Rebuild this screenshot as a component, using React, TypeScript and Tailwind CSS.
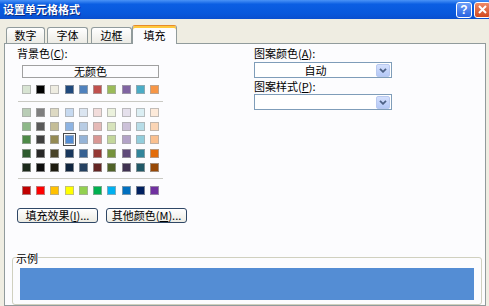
import React from "react";

const THEME = [
  "bg-[#d8e4d3]",
  "bg-[#000000]",
  "bg-[#eeece1]",
  "bg-[#1f497d]",
  "bg-[#4f81bd]",
  "bg-[#c0504d]",
  "bg-[#9bbb59]",
  "bg-[#8064a2]",
  "bg-[#4bacc6]",
  "bg-[#f79646]",
];

const SHADES = [
  ["bg-[#b9cdb6]", "bg-[#7f7f7f]", "bg-[#ddd9c3]", "bg-[#c6d9f0]", "bg-[#dbe5f1]", "bg-[#f2dcdb]", "bg-[#ebf1dd]", "bg-[#e5e0ec]", "bg-[#dbeef3]", "bg-[#fdeada]"],
  ["bg-[#8db889]", "bg-[#595959]", "bg-[#c4bd97]", "bg-[#8db3e2]", "bg-[#b8cce4]", "bg-[#e5b9b7]", "bg-[#d7e3bc]", "bg-[#ccc1d9]", "bg-[#b7dde8]", "bg-[#fbd5b5]"],
  ["bg-[#4e8a48]", "bg-[#3f3f3f]", "bg-[#948a54]", "bg-[#548dd4]", "bg-[#95b3d7]", "bg-[#d99694]", "bg-[#c3d69b]", "bg-[#b2a2c7]", "bg-[#92cddc]", "bg-[#fac08f]"],
  ["bg-[#2d5a2e]", "bg-[#262626]", "bg-[#4a452a]", "bg-[#17365d]", "bg-[#366092]", "bg-[#953734]", "bg-[#76923c]", "bg-[#5f497a]", "bg-[#31859b]", "bg-[#e36c09]"],
  ["bg-[#1c2a1b]", "bg-[#0d0d0d]", "bg-[#1d1b10]", "bg-[#0f243e]", "bg-[#244061]", "bg-[#632423]", "bg-[#4f6128]", "bg-[#3f3151]", "bg-[#205867]", "bg-[#974806]"],
];

const STANDARD = [
  "bg-[#c00000]",
  "bg-[#ff0000]",
  "bg-[#ffc000]",
  "bg-[#ffff00]",
  "bg-[#92d050]",
  "bg-[#00b050]",
  "bg-[#00b0f0]",
  "bg-[#0070c0]",
  "bg-[#002060]",
  "bg-[#7030a0]",
];

function Swatch({ color, selected }: { color: string; selected?: boolean }) {
  return (
    <div
      className={`w-[9px] h-[9px] border border-[#a8a8a8]/70 ${color} ${
        selected ? "outline outline-1 outline-[#4a4a4a] outline-offset-[1px]" : ""
      }`}
    />
  );
}

function SwatchRow({ colors, selectedIdx }: { colors: string[]; selectedIdx?: number }) {
  return (
    <div className="flex justify-between w-[137px]">
      {colors.map((c, i) => (
        <Swatch key={i} color={c} selected={i === selectedIdx} />
      ))}
    </div>
  );
}

function Tab({ label, width, active }: { label: string; width: string; active?: boolean }) {
  if (active) {
    return (
      <div
        className={`${width} h-[19px] -mb-px relative z-10 flex items-center justify-center bg-[#fcfcfe] border-x border-[#919b9c] border-t border-t-[#e68b2c] rounded-t-[3px] shadow-[inset_0_2px_0_#ffc83c] pt-[1px]`}
      >
        {label}
      </div>
    );
  }
  return (
    <div
      className={`${width} h-[16px] flex items-center justify-center border border-b-0 border-[#919b9c] rounded-t-[3px] bg-[linear-gradient(to_bottom,#ffffff,#ecebe5)]`}
    >
      {label}
    </div>
  );
}

function Chevron() {
  return (
    <svg width="8" height="5" viewBox="0 0 8 5">
      <polyline points="1,0.8 4,3.8 7,0.8" fill="none" stroke="#4d6185" strokeWidth="1.8" />
    </svg>
  );
}

function Combo({ value }: { value?: string }) {
  return (
    <div className="w-[138px] h-[16px] border border-[#7f9db9] bg-white flex items-center">
      <div className="flex-1 text-center leading-none">{value}</div>
      <div className="w-[14px] h-[13px] mr-px flex items-center justify-center rounded-[2px] border border-[#b9c9ef] bg-[linear-gradient(to_bottom,#d4e0fd,#b4c8f6)]">
        <Chevron />
      </div>
    </div>
  );
}

function XpButton({ children }: { children: React.ReactNode }) {
  return (
    <div className="w-[81px] h-[15px] flex items-center justify-center rounded-[3px] border border-[#2f4766] bg-[linear-gradient(to_bottom,#ffffff,#ecebe3)] leading-none">
      {children}
    </div>
  );
}

export default function App() {
  return (
    <div className="w-[489px] h-[306px] overflow-hidden flex flex-col bg-[#efede2] text-[11px] text-black font-['Noto_Sans_CJK_SC','Noto_Sans',sans-serif]">
      {/* title bar */}
      <div className="h-[19px] shrink-0 flex items-center justify-between pl-[3px] bg-[linear-gradient(to_bottom,#4a93f7_0%,#0b5ee3_22%,#0858dc_70%,#0a4fcf_100%)]">
        <span className="text-white font-bold text-[11px] leading-none [text-shadow:1px_1px_0_#0a2a80]">
          设置单元格格式
        </span>
        <div className="flex items-center gap-[2px] -mr-[2px]">
          <div className="w-[16px] h-[16px] rounded-[3px] border border-white flex items-center justify-center bg-[linear-gradient(to_bottom,#6d9ff8,#2a62e0)] text-white font-bold text-[12px] leading-none font-['Liberation_Sans',sans-serif]">
            ?
          </div>
          <div className="w-[17px] h-[16px] rounded-[3px] border border-white flex items-center justify-center bg-[linear-gradient(to_bottom,#ee8a67,#d2481f)]">
            <svg width="9" height="9" viewBox="0 0 9 9">
              <path d="M1 1 L8 8 M8 1 L1 8" stroke="white" strokeWidth="2" />
            </svg>
          </div>
        </div>
      </div>

      {/* tabs */}
      <div className="pt-[6px] pl-[6px] h-[24px] shrink-0 flex items-end">
        <Tab label="数字" width="w-[39px]" />
        <div className="ml-[2px]">
          <Tab label="字体" width="w-[41px]" />
        </div>
        <div className="ml-[3px]">
          <Tab label="边框" width="w-[41px]" />
        </div>
        <Tab label="填充" width="w-[45px]" active />
      </div>

      {/* panel */}
      <div className="flex-1 ml-[4px] w-[482px] border border-[#919b9c] bg-[#fcfcfe] pt-[2px] flex flex-col">
        <div className="flex">
          {/* background colour */}
          <div className="w-[249px] pl-[12px] flex flex-col">
            <div className="h-[14px] leading-[14px]">
              背景色(<span className="underline">C</span>):
            </div>
            <div className="ml-[5px] mt-[5px] w-[137px] h-[13px] border border-[#a0a0a0] flex items-center justify-center leading-none">
              无颜色
            </div>
            <div className="ml-[5px] mt-[7px]">
              <SwatchRow colors={THEME} />
            </div>
            <div className="ml-[1px] mt-[7px] w-[145px] h-px bg-[#c9c9c3]" />
            <div className="ml-[5px] mt-[6px] flex flex-col gap-[4.7px]">
              {SHADES.map((row, i) => (
                <SwatchRow key={i} colors={row} selectedIdx={i === 2 ? 3 : undefined} />
              ))}
            </div>
            <div className="ml-[1px] mt-[6px] w-[145px] h-px bg-[#c9c9c3]" />
            <div className="ml-[5px] mt-[7px]">
              <SwatchRow colors={STANDARD} />
            </div>
            <div className="mt-[13px] flex gap-[8px]">
              <XpButton>
                填充效果(<span className="underline">I</span>)...
              </XpButton>
              <XpButton>
                其他颜色(<span className="underline">M</span>)...
              </XpButton>
            </div>
          </div>

          {/* pattern */}
          <div className="flex flex-col">
            <div className="h-[14px] leading-[14px]">
              图案颜色(<span className="underline">A</span>):
            </div>
            <div className="mt-[2px]">
              <Combo value="自动" />
            </div>
            <div className="mt-[1px] h-[14px] leading-[14px]">
              图案样式(<span className="underline">P</span>):
            </div>
            <div className="mt-[1px]">
              <Combo />
            </div>
          </div>
        </div>

        {/* sample */}
        <fieldset className="mt-[28px] ml-[7px] w-[470px] border border-[#d0d0bf] rounded-[3px] pb-[4px]">
          <legend className="ml-[3px] leading-[14px]">示例</legend>
          <div className="mx-[7px] mt-[3px] h-[32px] bg-[#548dd4]" />
        </fieldset>
      </div>
    </div>
  );
}
